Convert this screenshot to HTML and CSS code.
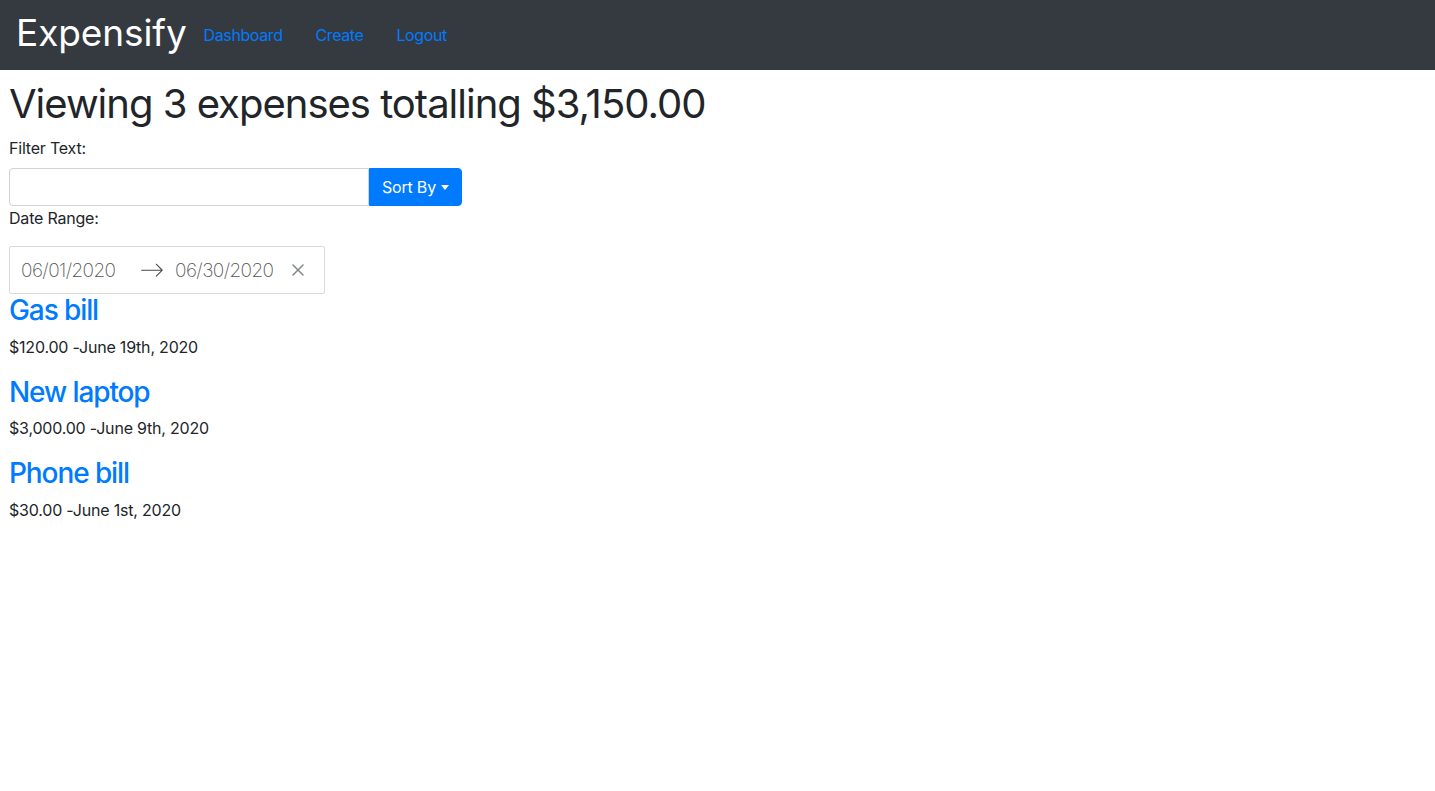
FILE: index.html
```html
<!DOCTYPE html>
<html lang="en">
<head>
<meta charset="utf-8">
<title>Expensify</title>
<link rel="stylesheet" href="styles.css">
</head>
<body>
<nav class="navbar">
  <a class="brand" href="#">Expensify</a>
  <ul class="nav">
    <li><a class="nav-link" href="#">Dashboard</a></li>
    <li><a class="nav-link" href="#">Create</a></li>
    <li><a class="nav-link" href="#">Logout</a></li>
  </ul>
</nav>
<main class="content">
  <h1 class="summary">Viewing 3 expenses totalling $3,150.00</h1>
  <div class="filters">
    <label class="label">Filter Text:</label>
    <div class="input-group">
      <input class="text-input" type="text">
      <button class="btn-sort" type="button">Sort By<span class="caret"></span></button>
    </div>
    <label class="label label-date">Date Range:</label>
    <div class="date-range">
      <div class="date-input">06/01/2020</div>
      <div class="arrow">
        <svg viewBox="0 0 1000 1000" width="24" height="24"><path d="M694 242l249 250c12 11 12 21 1 32L694 773c-5 5-10 7-16 7s-11-2-16-7c-11-11-11-21 0-32l210-210H68c-13 0-23-10-23-23s10-23 23-23h806L662 275c-21-22 11-54 32-33z"/></svg>
      </div>
      <div class="date-input">06/30/2020</div>
      <button class="clear" type="button" aria-label="Clear Dates">
        <svg viewBox="0 0 12 12" width="12" height="12"><path fill-rule="evenodd" d="M11.53.47a.75.75 0 0 0-1.061 0l-4.470 4.470L1.529.47A.75.75 0 1 0 .468 1.531l4.470 4.470-4.470 4.470a.75.75 0 1 0 1.061 1.061l4.470-4.470 4.470 4.470a.75.75 0 1 0 1.061-1.061l-4.470-4.470 4.470-4.470a.75.75 0 0 0 0-1.061z"/></svg>
      </button>
    </div>
  </div>
  <div class="expenses">
    <div class="expense">
      <a class="expense-title" href="#">Gas bill</a>
      <p class="expense-meta">$120.00 -June 19th, 2020</p>
    </div>
    <div class="expense">
      <a class="expense-title" href="#">New laptop</a>
      <p class="expense-meta">$3,000.00 -June 9th, 2020</p>
    </div>
    <div class="expense">
      <a class="expense-title" href="#">Phone bill</a>
      <p class="expense-meta">$30.00 -June 1st, 2020</p>
    </div>
  </div>
</main>
</body>
</html>
```
FILE: styles.css
```css
* { box-sizing: border-box; }
html, body { margin: 0; padding: 0; }
body {
  font-family: Inter, "Liberation Sans", Arial, sans-serif;
  font-size: 16px;
  line-height: 1.5;
  color: #212529;
  background: #fff;
}
a { text-decoration: none; }

.navbar {
  height: 70px;
  background: #343a40;
  display: flex;
  align-items: center;
  padding: 0 16px;
}
.brand {
  color: #fff;
  font-size: 37px;
  line-height: 1.2;
  margin-right: 17px;
  letter-spacing: -0.1px;
  padding-bottom: 4px;
}
.nav {
  display: flex;
  list-style: none;
  margin: 0;
  padding: 0 0 1px;
  gap: 33px;
}
.nav-link {
  color: #007bff;
  font-size: 16px;
  letter-spacing: -0.4px;
}

.content { padding: 10px 9px 0; }
.summary {
  font-size: 40px;
  font-weight: 400;
  line-height: 1.2;
  margin: 0 0 8px;
  letter-spacing: -1px;
}
.filters { display: flex; flex-direction: column; align-items: flex-start; }
.label { display: block; margin-bottom: 8px; font-size: 16px; letter-spacing: -0.2px; }
.input-group { display: flex; }
.text-input {
  width: 360px;
  height: 38px;
  border: 1px solid #ced4da;
  border-radius: 4px 0 0 4px;
  padding: 6px 12px;
  font: inherit;
}
.btn-sort {
  height: 38px;
  background: #007bff;
  border: 1px solid #007bff;
  color: #fff;
  border-radius: 0 4px 4px 0;
  padding: 6px 12px;
  font: inherit;
  letter-spacing: -0.2px;
  display: flex;
  align-items: center;
}
.caret {
  display: inline-block;
  margin-left: 5px;
  width: 0; height: 0;
  border-top: 5px solid #fff;
  border-left: 4.5px solid transparent;
  border-right: 4.5px solid transparent;
}
.label-date { margin-bottom: 16px; }
.date-range {
  position: relative;
  display: flex;
  align-items: center;
  border: 1px solid #dbdbdb;
  border-radius: 2px;
  padding-right: 30px;
  height: 48px;
}
.date-input {
  width: 130px;
  padding: 11px 11px 9px;
  font-size: 19px;
  line-height: 24px;
  font-weight: 200;
  color: #555;
  letter-spacing: -0.6px;
}
.arrow { width: 24px; height: 24px; display: flex; }
.arrow svg { fill: #484848; }
.clear {
  position: absolute;
  right: 0;
  top: 50%;
  transform: translateY(-50%);
  margin: 0 10px 0 5px;
  padding: 10px;
  border: 0;
  background: none;
  display: flex;
}
.clear svg { fill: #82888a; }

.expense-title {
  display: block;
  color: #007bff;
  font-size: 28px;
  line-height: 1.2;
  font-weight: 500;
  margin-bottom: 7px;
  letter-spacing: -1.1px;
  padding-top: 2px;
  margin-top: -2px;
}
.expense-meta { margin: 0 0 17px; letter-spacing: -0.2px; }
```
